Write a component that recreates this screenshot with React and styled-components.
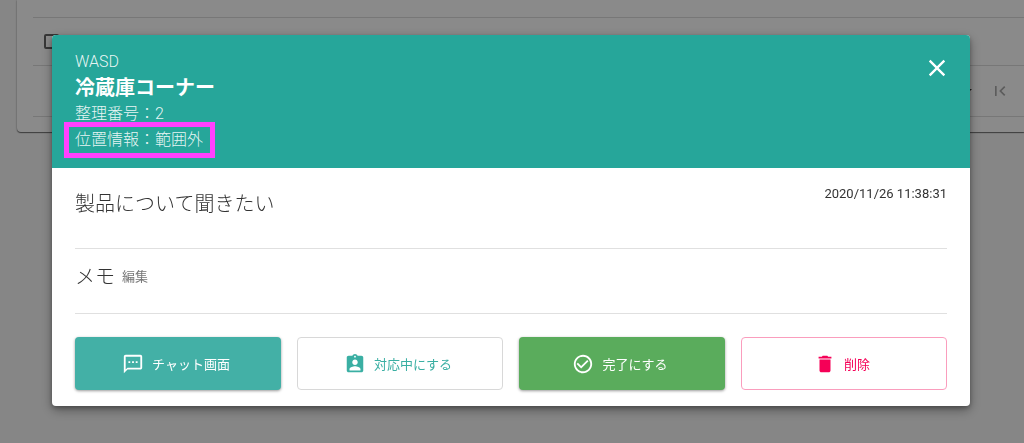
import styled, { createGlobalStyle } from 'styled-components'
import {
  MdArrowDropDown,
  MdAssignmentInd,
  MdCheckCircleOutline,
  MdClose,
  MdDelete,
  MdFirstPage,
  MdOutlineTextsms,
} from 'react-icons/md'

export default function App() {
  return (
    <>
      <GlobalStyle />
      <RequestTable />
      <Overlay>
        <RequestDialog />
      </Overlay>
    </>
  )
}

function RequestTable() {
  return (
    <Page>
      <Panel>
        <HeadRow />
        <Row>
          <Checkbox type="checkbox" aria-label="行を選択" />
        </Row>
        <Pagination>
          <PageSize aria-label="表示件数" defaultValue="10">
            <option value="10">10</option>
            <option value="20">20</option>
          </PageSize>
          <MdArrowDropDown size={24} />
          <PageButton type="button" disabled aria-label="最初のページ">
            <MdFirstPage size={20} />
          </PageButton>
        </Pagination>
      </Panel>
    </Page>
  )
}

function RequestDialog() {
  return (
    <Dialog role="dialog" aria-modal="true" aria-labelledby="request-title">
      <Header>
        <div>
          <HeaderText>WASD</HeaderText>
          <Title id="request-title">冷蔵庫コーナー</Title>
          <HeaderText>整理番号：2</HeaderText>
          <Location>位置情報：範囲外</Location>
        </div>
        <CloseButton type="button" aria-label="閉じる">
          <MdClose size={28} />
        </CloseButton>
      </Header>
      <Message>
        <Heading>製品について聞きたい</Heading>
        <Time dateTime="2020-11-26T11:38:31">2020/11/26 11:38:31</Time>
      </Message>
      <Memo>
        <Heading>メモ</Heading>
        <EditButton type="button">編集</EditButton>
      </Memo>
      <Actions>
        <ActionButton type="button" $color="#fff" $background="#43b0a6">
          <MdOutlineTextsms size={22} />
          チャット画面
        </ActionButton>
        <ActionButton type="button" $color="#3aafa3" $border="#d8d8d8">
          <MdAssignmentInd size={22} />
          対応中にする
        </ActionButton>
        <ActionButton type="button" $color="#fff" $background="#5aac5c">
          <MdCheckCircleOutline size={22} />
          完了にする
        </ActionButton>
        <ActionButton type="button" $color="#f50057" $border="#fa9dbd">
          <MdDelete size={22} />
          削除
        </ActionButton>
      </Actions>
    </Dialog>
  )
}

const GlobalStyle = createGlobalStyle`
  * {
    box-sizing: border-box;
  }

  body {
    margin: 0;
    min-height: 100vh;
    overflow: hidden;
    background: #f7f7f7;
    color: #333;
    font-family: Roboto, 'Noto Sans CJK JP', sans-serif;
  }

  button,
  select {
    padding: 0;
    border: none;
    background: none;
    color: inherit;
    font-family: inherit;
  }
`

const Page = styled.main`
  padding-left: 17px;
`

const Panel = styled.section`
  padding: 0 0 15px 16px;
  background: #fff;
  border-bottom-left-radius: 4px;
  box-shadow: 0 1px 1px rgba(0, 0, 0, 0.5), 0 0 2px rgba(0, 0, 0, 0.3);
`

const HeadRow = styled.div`
  height: 18px;
  border-bottom: 1px solid #dcdcdc;
`

const Row = styled.div`
  display: flex;
  align-items: center;
  height: 48px;
  padding-left: 11px;
  border-bottom: 1px solid #dcdcdc;
`

const Checkbox = styled.input`
  appearance: none;
  width: 15px;
  height: 15px;
  margin: 0;
  border: 2px solid #666;
  border-radius: 2px;
`

const Pagination = styled.div`
  display: flex;
  align-items: center;
  justify-content: flex-end;
  height: 51px;
  padding-right: 14px;
  border-bottom: 1px solid #dcdcdc;
`

const PageSize = styled.select`
  appearance: none;
  width: 40px;
  font-size: 13px;
`

const PageButton = styled.button`
  display: flex;
  margin-left: 11px;
  color: #aaa;
`

const Overlay = styled.div`
  position: fixed;
  inset: 0;
  padding: 35px 54px 37px 52px;
  background: rgba(0, 0, 0, 0.46);
`

const Dialog = styled.section`
  overflow: hidden;
  border-radius: 4px;
  background: #fff;
  box-shadow: 0 4px 12px rgba(0, 0, 0, 0.35), 0 2px 4px rgba(0, 0, 0, 0.25);
`

const Header = styled.header`
  display: flex;
  align-items: flex-start;
  justify-content: space-between;
  padding: 14px 23px 15px;
  background: #26a69a;
  color: #fff;
`

const HeaderText = styled.p`
  margin: 0;
  color: rgba(255, 255, 255, 0.9);
  font-size: 16px;
  font-weight: 300;
  line-height: 26px;
`

const Title = styled.h2`
  margin: 0;
  font-size: 20px;
  font-weight: 700;
  line-height: 26px;
`

const Location = styled(HeaderText)`
  width: fit-content;
  margin: 0 -6px;
  padding: 0 7px 0 6px;
  outline: 5px solid #ff40ff;
`

const CloseButton = styled.button`
  display: flex;
  margin: 5px -4px 0 0;
`

const Message = styled.div`
  display: flex;
  align-items: flex-start;
  justify-content: space-between;
  margin: 0 23px;
  padding: 20px 0 28px;
  border-bottom: 1px solid #e0e0e0;
`

const Memo = styled.div`
  display: flex;
  align-items: center;
  gap: 7px;
  margin: 0 23px;
  padding: 12px 0 20px;
  border-bottom: 1px solid #e0e0e0;
`

const Heading = styled.h3`
  margin: 0;
  font-size: 20px;
  font-weight: 300;
  line-height: 32px;
`

const Time = styled.time`
  font-size: 13px;
  line-height: 12px;
`

const EditButton = styled.button`
  color: #777;
  font-size: 13px;
  line-height: 32px;
`

const Actions = styled.div`
  display: grid;
  grid-template-columns: repeat(4, 1fr);
  gap: 16px;
  padding: 23px 23px 16px;
`

const ActionButton = styled.button`
  display: flex;
  align-items: center;
  justify-content: center;
  gap: 8px;
  height: 53px;
  border: ${props => (props.$border ? `1px solid ${props.$border}` : 'none')};
  border-radius: 4px;
  background: ${props => props.$background || '#fff'};
  box-shadow: ${props =>
    props.$background ? '0 1px 3px rgba(0, 0, 0, 0.4)' : 'none'};
  color: ${props => props.$color};
  font-size: 13px;

  svg {
    margin-left: -4px;
  }
`
